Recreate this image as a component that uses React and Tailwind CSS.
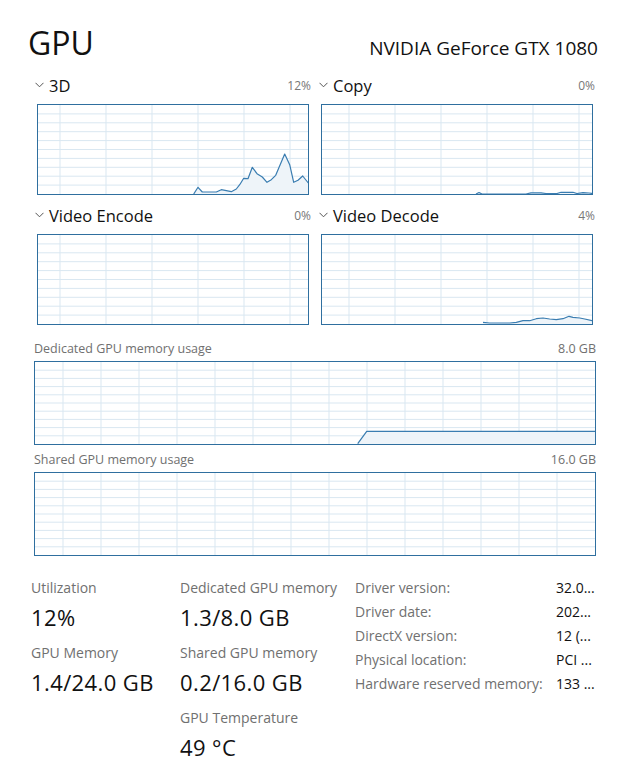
import React from "react";

const pts3d = [[156.7,90],[161,83.3],[165.3,88],[179.3,88],[184.3,85.7],[189.3,86.7],[194.3,87.7],[199.3,85],[202.7,80.7],[206.7,74.3],[211,74.7],[215.3,63.3],[220,69.7],[225.3,73],[230,78.3],[234.3,75.7],[238.7,71.3],[247.7,50],[252.7,60.7],[256.7,78.3],[261,76.3],[265.7,72],[271.3,79]];
const ptsCopy = [[155,90],[158,88.5],[161,90],[205,90],[210,88.8],[220,88.8],[225,89.5],[236,89.5],[240,88.3],[252,88.3],[256,89.5],[262,88.7],[268,89],[271.3,89.5]];
const ptsDecode = [[162,88.3],[168.7,89],[188.7,89],[195.3,88.3],[202,86.7],[208.7,86.7],[215.3,84.7],[222,84],[228.7,85],[235.3,85.7],[242,84.7],[248,82.3],[252,83.3],[258.7,84],[263.7,85],[271.3,86.7]];
const ptsDed = [[323.7,82.7],[332.7,70.4],[561,70.4]];

function Chart({ w, h, vOffset, vStep, rows = 10, points, sizeClass }) {
  const iw = w - 2;
  const ih = h - 2;
  const vs = [];
  for (let x = vOffset; x < iw; x += vStep) vs.push(x);
  const hs = [];
  for (let i = 1; i < rows; i++) hs.push((ih * i) / rows);
  let line = null;
  let area = null;
  if (points && points.length) {
    const p = points.map(([x, y]) => [x - 1, y - 1]);
    line = "M" + p.map(([x, y]) => `${x},${y}`).join(" L");
    area = line + ` L${p[p.length - 1][0]},${ih} L${p[0][0]},${ih} Z`;
  }
  return (
    <div className={`border border-[#2f6f9f] bg-white ${sizeClass}`}>
      <svg width={iw} height={ih} className="block">
        {hs.map((y, i) => (
          <line key={"h" + i} x1="0" x2={iw} y1={y} y2={y} stroke="#d9e7f1" strokeWidth="1" />
        ))}
        {vs.map((x, i) => (
          <line key={"v" + i} x1={x} x2={x} y1="0" y2={ih} stroke="#d9e7f1" strokeWidth="1" />
        ))}
        {area && <path d={area} fill="#eef4f9" stroke="none" />}
        {line && <path d={line} fill="none" stroke="#3a7db1" strokeWidth="1.2" strokeLinejoin="round" />}
      </svg>
    </div>
  );
}

function Chevron() {
  return (
    <svg width="9" height="6" viewBox="0 0 9 6" className="block mr-[5px] mt-[-3px]">
      <polyline points="0.5,0.8 4.5,4.8 8.5,0.8" fill="none" stroke="#555" strokeWidth="1" />
    </svg>
  );
}

function Engine({ label, pct, points, vOffset }) {
  return (
    <div>
      <div className="flex items-center justify-between h-[20px]">
        <div className="flex items-center">
          <Chevron />
          <span className="text-[16.5px] leading-[20px] text-[#111]">{label}</span>
        </div>
        <span className="text-[12px] leading-[20px] text-[#777]">{pct}</span>
      </div>
      <div className="mt-[8px] pl-[2px]">
        <Chart w={272} h={91} vOffset={vOffset} vStep={46} points={points} sizeClass="w-[272px] h-[91px]" />
      </div>
    </div>
  );
}

function Stat({ label, value }) {
  return (
    <div>
      <div className="text-[14px] leading-[20px] text-[#707070]">{label}</div>
      <div className="mt-[5px] text-[22px] leading-[28px] tracking-[0.4px] text-[#111]">{value}</div>
    </div>
  );
}

export default function App() {
  const info = [
    ["Driver version:", "32.0..."],
    ["Driver date:", "202..."],
    ["DirectX version:", "12 (..."],
    ["Physical location:", "PCI ..."],
    ["Hardware reserved memory:", "133 ..."],
  ];
  return (
    <div className="w-[618px] h-[772px] bg-white font-['Open_Sans',sans-serif] overflow-hidden">
      <div className="flex items-baseline justify-between pl-[28px] pr-[20px] pt-[23px]">
        <div className="text-[32px] leading-[40px] text-[#111]">GPU</div>
        <div className="text-[19px] leading-[24px] text-[#111]">NVIDIA GeForce GTX 1080</div>
      </div>

      <div className="grid grid-cols-[276px_276px] gap-x-[8px] gap-y-[11px] pl-[35px] mt-[13px]">
        <Engine label="3D" pct="12%" points={pts3d} vOffset={22} />
        <Engine label="Copy" pct="0%" points={ptsCopy} vOffset={27} />
        <Engine label="Video Encode" pct="0%" vOffset={22} />
        <Engine label="Video Decode" pct="4%" points={ptsDecode} vOffset={27} />
      </div>

      <div className="pl-[34px] mt-[15px] w-[596px]">
        <div className="flex justify-between text-[12.5px] leading-[18px] text-[#707070]">
          <span>Dedicated GPU memory usage</span>
          <span>8.0 GB</span>
        </div>
        <div className="mt-[3px]">
          <Chart w={562} h={84} vOffset={28} vStep={38} points={ptsDed} sizeClass="w-[562px] h-[84px]" />
        </div>
        <div className="mt-[6px] flex justify-between text-[12.5px] leading-[18px] text-[#707070]">
          <span>Shared GPU memory usage</span>
          <span>16.0 GB</span>
        </div>
        <div className="mt-[3px]">
          <Chart w={562} h={84} vOffset={28} vStep={38} sizeClass="w-[562px] h-[84px]" />
        </div>
      </div>

      <div className="flex pl-[31px] mt-[20px]">
        <div className="w-[149px] pt-[2px] flex flex-col gap-[12px]">
          <Stat label="Utilization" value="12%" />
          <Stat label="GPU Memory" value="1.4/24.0 GB" />
        </div>
        <div className="w-[175px] pt-[2px] flex flex-col gap-[12px]">
          <Stat label="Dedicated GPU memory" value="1.3/8.0 GB" />
          <Stat label="Shared GPU memory" value="0.2/16.0 GB" />
          <Stat label="GPU Temperature" value="49 °C" />
        </div>
        <div className="flex flex-col">
          {info.map(([k, v]) => (
            <div key={k} className="flex text-[14px] leading-[24px]">
              <span className="w-[201px] text-[#707070]">{k}</span>
              <span className="text-[#111]">{v}</span>
            </div>
          ))}
        </div>
      </div>
    </div>
  );
}
